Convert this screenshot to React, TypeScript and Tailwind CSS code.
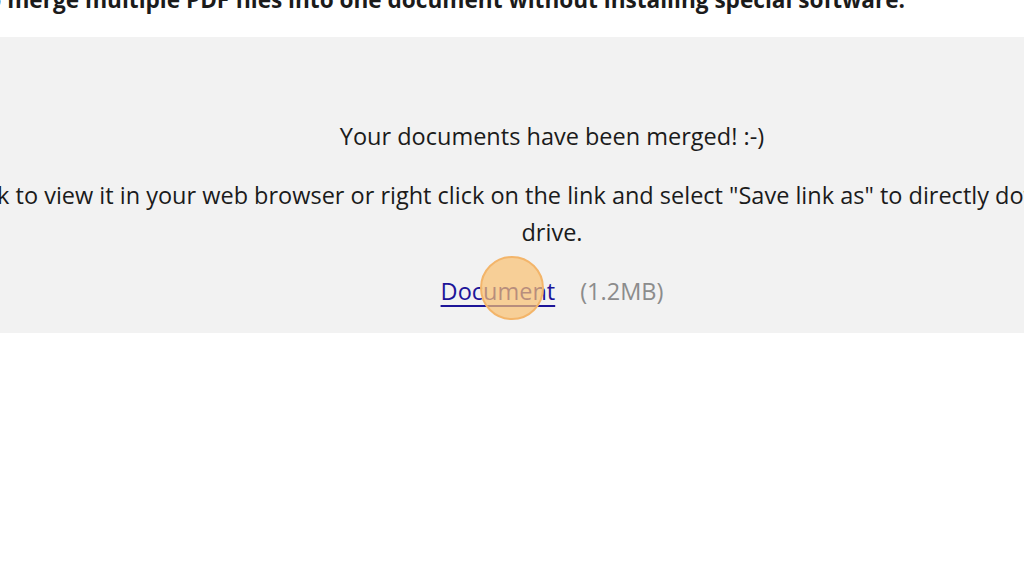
import React from 'react';

const App: React.FC = () => {
  return (
    <div className="relative h-[576px] w-[1024px] overflow-hidden bg-white text-[#1b1b1b]" style={{ fontFamily: '"Open Sans", "Noto Sans", sans-serif' }}>
      {/* Intro line, cut off at the top of the viewport */}
      <div className="-mt-[15px] flex h-[52px] items-start justify-end pr-[119px]">
        <p className="whitespace-nowrap text-[22.6px] font-bold leading-[30px]">
          This tool allows you to merge multiple PDF files into one document without installing special software.
        </p>
      </div>

      {/* Result panel */}
      <div className="flex h-[296px] w-[1104px] flex-col items-center bg-[#f2f2f2] pt-[81px] text-[23.5px] leading-[37px]">
        <p className="whitespace-nowrap">Your documents have been merged! :-)</p>
        <p className="mt-[22px] flex flex-col items-center">
          <span className="whitespace-nowrap">
            Click on the link to view it in your web browser or right click on the link and select "Save link as" to directly download it to your hard
          </span>
          <span className="whitespace-nowrap">drive.</span>
        </p>
        <div className="mt-[22px] flex items-center gap-[25px]">
          <a href="#" className="text-[#1d1599] underline decoration-2 underline-offset-[5px]">
            Document
          </a>
          <span className="text-[#8c8c8c]">(1.2MB)</span>
        </div>
      </div>

      {/* Click indicator */}
      <div className="pointer-events-none absolute left-[480px] top-[256px] h-[64px] w-[64px] rounded-full border-2 border-[#f3b56a] bg-[#f9c070]/70" />
    </div>
  );
};

export default App;
